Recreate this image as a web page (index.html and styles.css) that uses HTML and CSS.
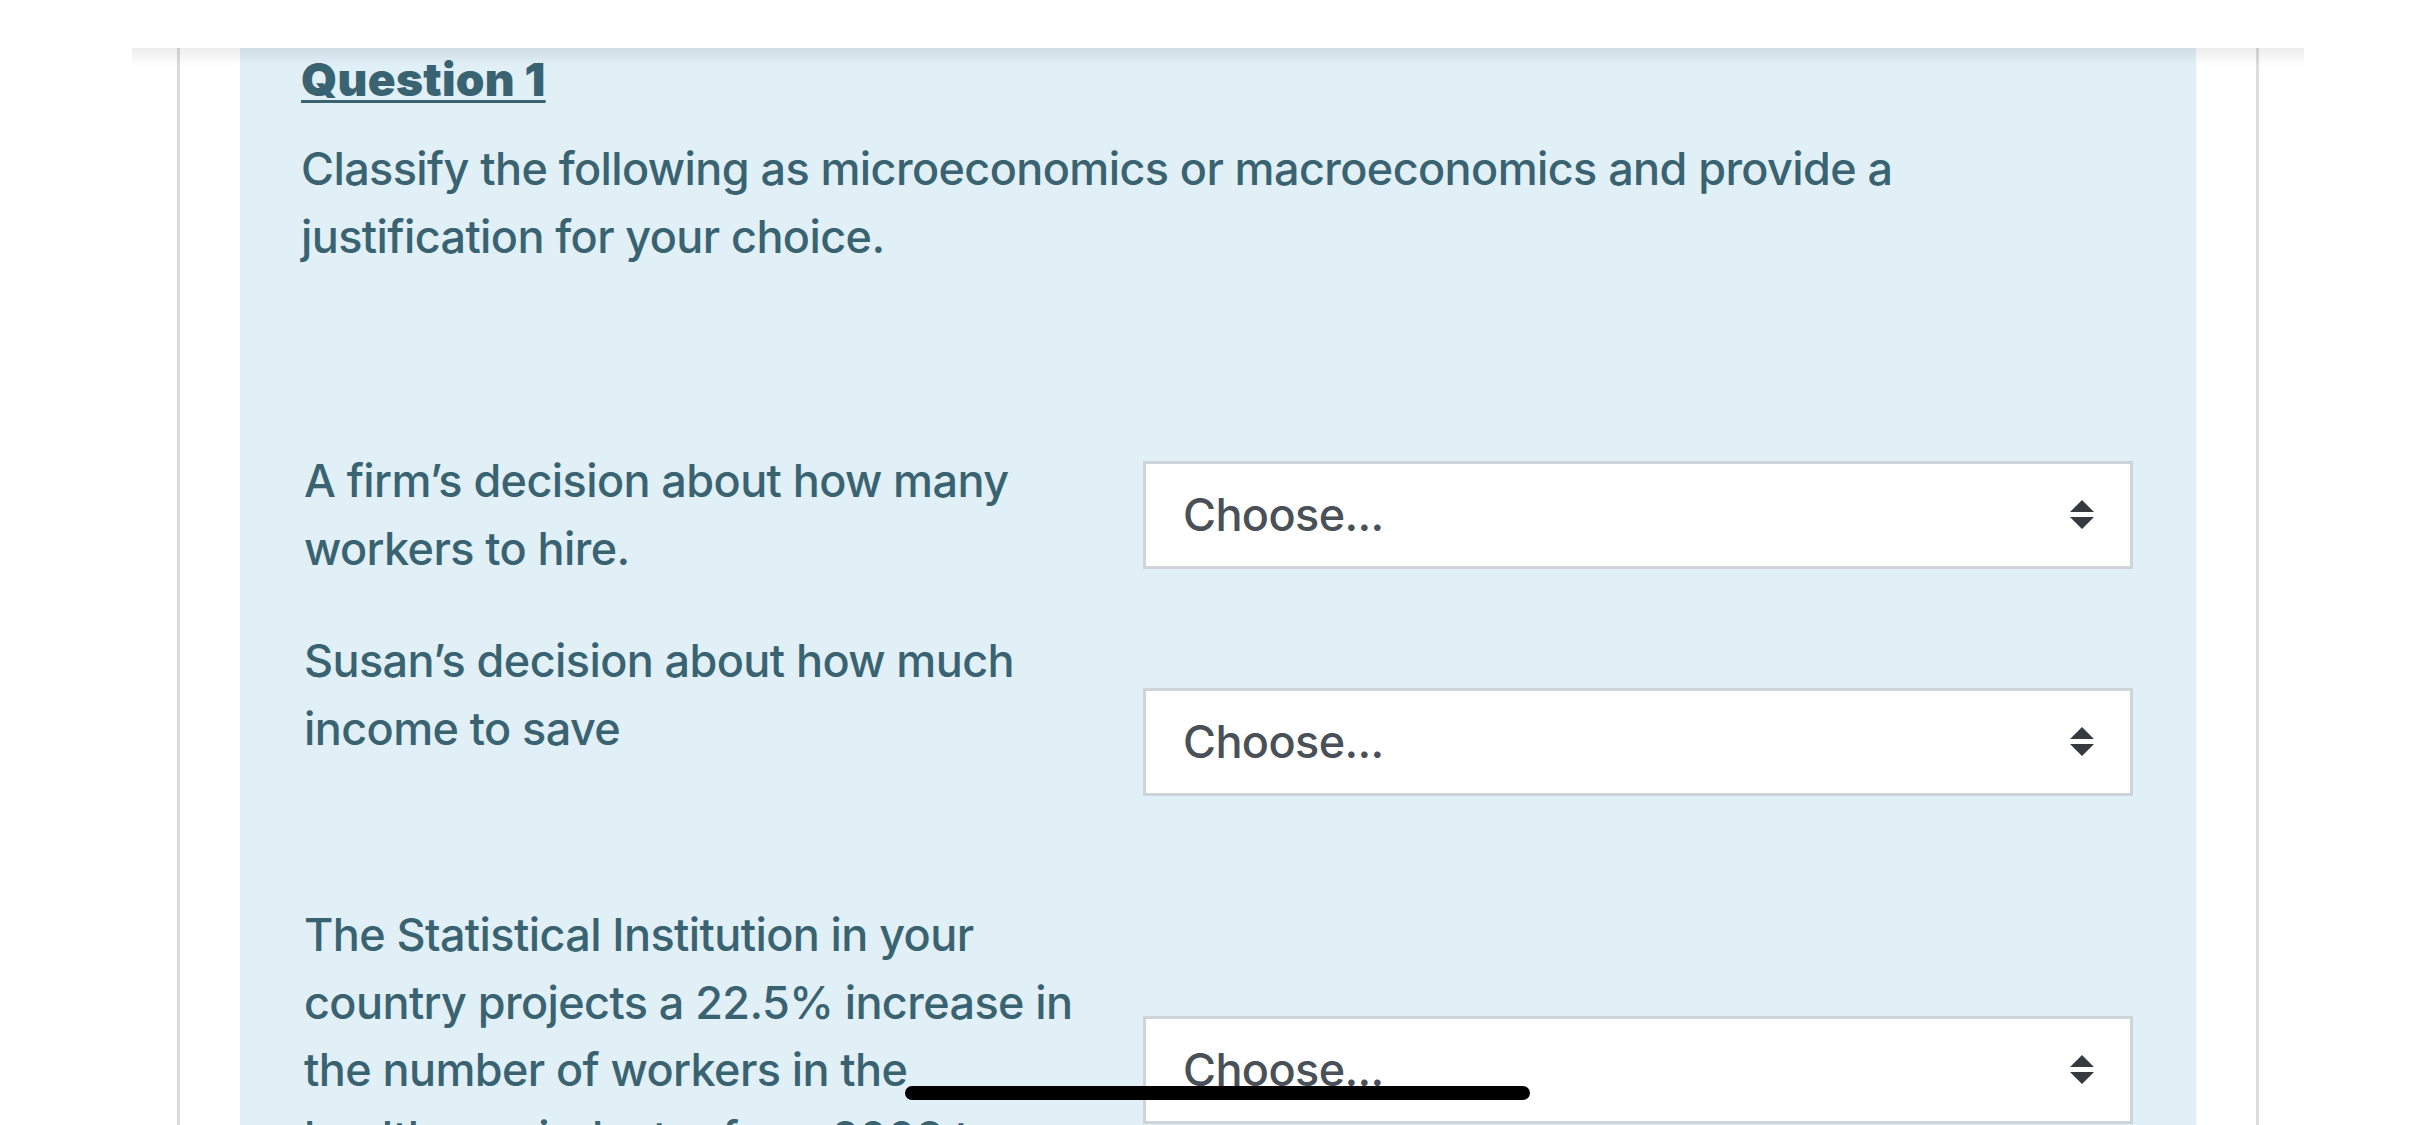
FILE: index.html
```html
<!DOCTYPE html>
<html lang="en">
<head>
<meta charset="utf-8">
<title>Question 1</title>
<link rel="stylesheet" href="styles.css">
</head>
<body>
<header class="topbar"></header>
<main class="page">
  <section class="formulation">
    <h3 class="qno">Question 1</h3>
    <p class="qtext">Classify the following as microeconomics or macroeconomics and provide a justification for your choice.</p>
    <div class="answer">
      <div class="label">A firm’s decision about how many workers to hire.</div>
      <div class="select"><span>Choose...</span>
        <svg class="arrows" width="24" height="30" viewBox="0 0 24 30"><path d="M12 0 L24 12 L0 12 Z M0 17 L24 17 L12 29 Z" fill="#343a40"/></svg>
      </div>
      <div class="label label-tall">Susan’s decision about how much income to save</div>
      <div class="select"><span>Choose...</span>
        <svg class="arrows" width="24" height="30" viewBox="0 0 24 30"><path d="M12 0 L24 12 L0 12 Z M0 17 L24 17 L12 29 Z" fill="#343a40"/></svg>
      </div>
      <div class="label">The Statistical Institution in your country projects a 22.5% increase in the number of workers in the healthcare industry from 2008 to 2018.</div>
      <div class="select"><span>Choose...</span>
        <svg class="arrows" width="24" height="30" viewBox="0 0 24 30"><path d="M12 0 L24 12 L0 12 Z M0 17 L24 17 L12 29 Z" fill="#343a40"/></svg>
      </div>
    </div>
  </section>
</main>
<div class="home-indicator"></div>
</body>
</html>
```
FILE: styles.css
```css
html {
  overflow: hidden;
}
body {
  margin: 0;
  background: #ffffff;
  font-family: Inter, "Noto Sans", "Liberation Sans", sans-serif;
  color: #3a6372;
}
.topbar {
  position: fixed;
  top: 0;
  left: 132px;
  width: 2172px;
  height: 48px;
  background: #ffffff;
  z-index: 10;
}
.topbar::after {
  content: "";
  position: absolute;
  left: 0;
  right: 0;
  top: 48px;
  height: 18px;
  background: linear-gradient(rgba(0, 0, 0, 0.07), rgba(0, 0, 0, 0));
}
.page {
  margin: 0 auto;
  border-left: 3px solid #dcdcdc;
  border-right: 3px solid #dcdcdc;
  padding: 0 60px;
  box-sizing: content-box;
  width: 1956px;
}
.formulation {
  background: #e1eff7;
  padding: 53px 63px 200px 61px;
}
.qno {
  margin: 0 0 29px 0;
  font-size: 46px;
  line-height: 53px;
  font-weight: 900;
  letter-spacing: 0.3px;
  text-decoration: underline;
  text-decoration-thickness: 3px;
  text-underline-offset: 4px;
}
.qtext {
  margin: 0 0 177px 0;
  font-size: 45px;
  line-height: 67.5px;
  font-weight: 500;
  letter-spacing: -0.6px;
}
.answer {
  display: grid;
  grid-template-columns: 800px 990px;
  column-gap: 39px;
  row-gap: 45px;
  align-items: center;
  padding-left: 3px;
}
.label {
  font-size: 45px;
  line-height: 67.5px;
  font-weight: 500;
  letter-spacing: -0.6px;
}
.label-tall {
  padding-bottom: 94px;
}
.select {
  display: flex;
  align-items: center;
  justify-content: space-between;
  height: 102px;
  border: 3px solid #ced4da;
  background: #ffffff;
  padding: 0 36px 0 37px;
  font-size: 45px;
  line-height: 67.5px;
  font-weight: 500;
  letter-spacing: -0.6px;
  color: #495057;
}
.arrows {
  display: block;
}
.home-indicator {
  position: fixed;
  left: 905px;
  bottom: 25px;
  width: 625px;
  height: 14px;
  border-radius: 7px;
  background: #000000;
  z-index: 20;
}
```
